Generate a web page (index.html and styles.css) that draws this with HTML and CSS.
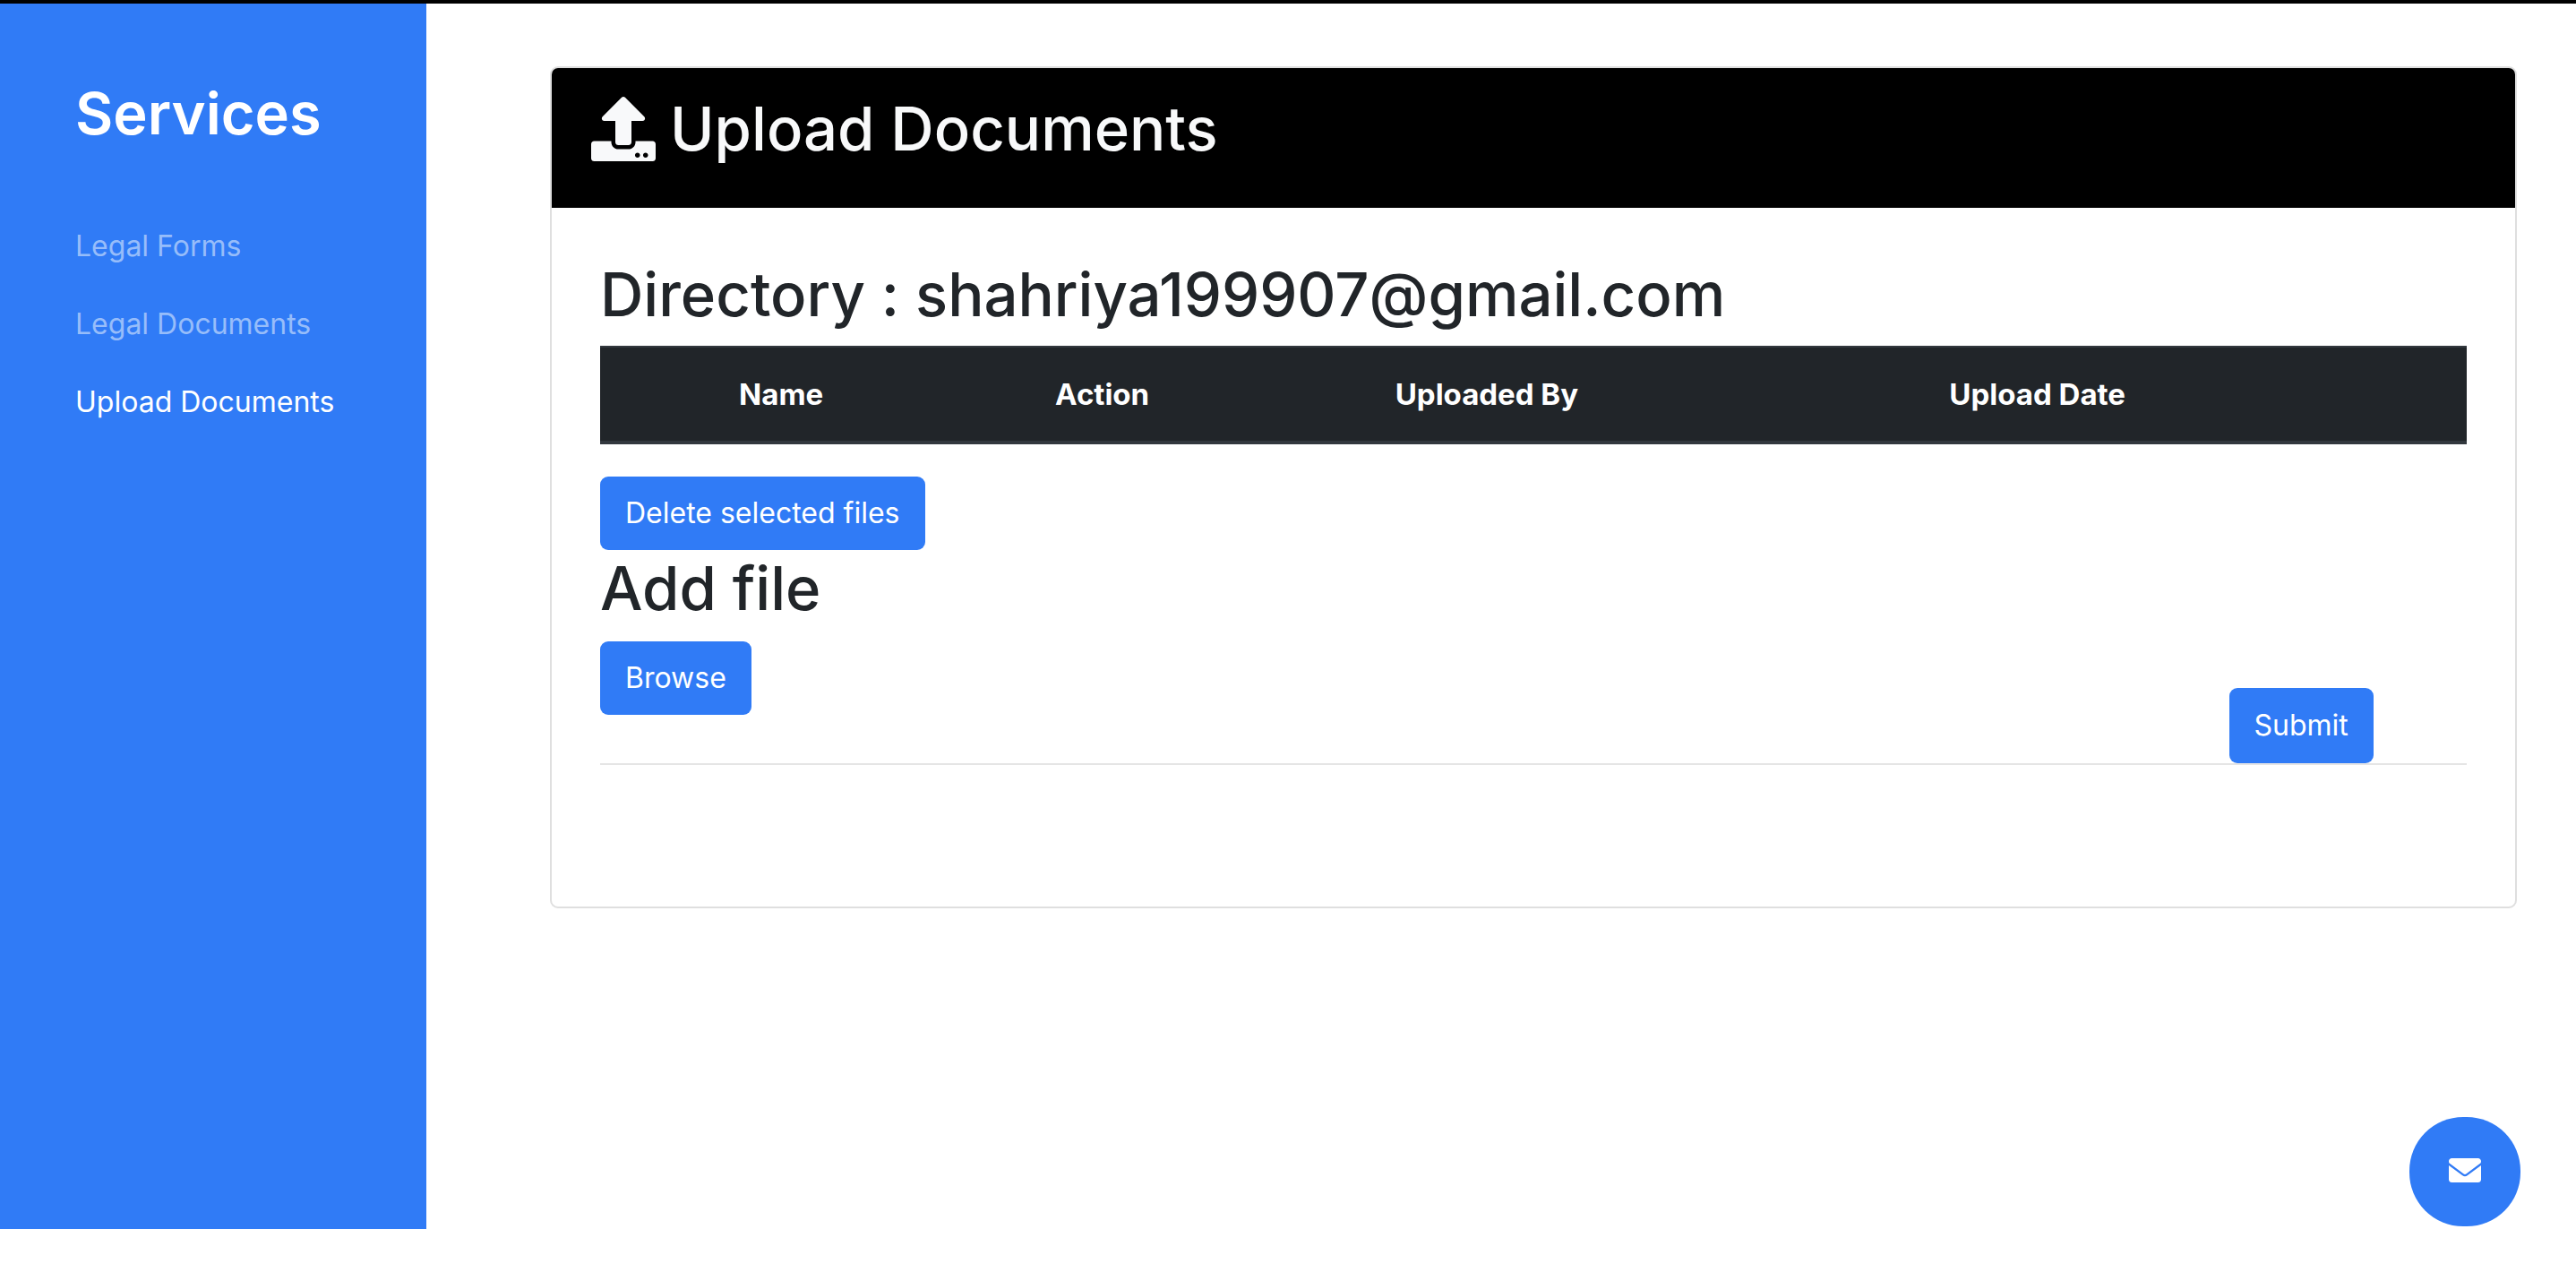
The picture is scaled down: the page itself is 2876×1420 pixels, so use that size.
FILE: index.html
```html
<!DOCTYPE html>
<html lang="en">
<head>
  <meta charset="utf-8">
  <title>Upload Documents</title>
  <link rel="stylesheet" href="styles.css">
</head>
<body>
  <div class="layout">
    <nav class="sidebar" aria-label="Services">
      <h1 class="sidebar-title">Services</h1>
      <ul class="sidebar-list">
        <li><a class="sidebar-link" href="#forms">Legal Forms</a></li>
        <li><a class="sidebar-link" href="#documents">Legal Documents</a></li>
        <li><a class="sidebar-link active" href="#upload" aria-current="page">Upload Documents</a></li>
      </ul>
    </nav>
    <main class="content">
      <section class="card">
        <header class="card-header">
          <svg class="upload-icon" viewBox="0 0 512 512" aria-hidden="true"><path fill="currentColor" d="M296 384h-80c-13.3 0-24-10.7-24-24V192h-87.7c-17.8 0-26.7-21.5-14.1-34.1L242.3 5.7c7.5-7.5 19.8-7.5 27.3 0l152.2 152.2c12.6 12.6 3.7 34.1-14.1 34.1H320v168c0 13.3-10.7 24-24 24zm216-8v112c0 13.3-10.7 24-24 24H24c-13.3 0-24-10.7-24-24V376c0-13.3 10.7-24 24-24h136v8c0 30.9 25.1 56 56 56h80c30.9 0 56-25.1 56-56v-8h136c13.3 0 24 10.7 24 24zm-124 88c0-11-9-20-20-20s-20 9-20 20 9 20 20 20 20-9 20-20zm64 0c0-11-9-20-20-20s-20 9-20 20 9 20 20 20 20-9 20-20z"/></svg>
          <h1 class="heading">Upload Documents</h1>
        </header>
        <div class="card-body">
          <h1 class="heading">Directory : shahriya199907@gmail.com</h1>
          <table class="files">
            <colgroup>
              <col class="col-name"><col class="col-action"><col class="col-by"><col class="col-date"><col>
            </colgroup>
            <thead>
              <tr><th scope="col">Name</th><th scope="col">Action</th><th scope="col">Uploaded By</th><th scope="col">Upload Date</th><td></td></tr>
            </thead>
          </table>
          <button class="btn" type="button">Delete selected files</button>
          <h1 class="heading">Add file</h1>
          <form class="upload-row">
            <button class="btn" type="button">Browse</button>
            <button class="btn btn-submit" type="submit">Submit</button>
          </form>
        </div>
      </section>
    </main>
  </div>
  <button class="contact" type="button" aria-label="Contact us">
    <svg class="mail-icon" viewBox="0 64 512 384" aria-hidden="true"><path fill="currentColor" d="M48 64C21.500 64 0 85.500 0 112c0 15.100 7.100 29.300 19.200 38.400L236.800 313.600c11.400 8.500 27 8.500 38.400 0L492.800 150.400c12.100-9.100 19.200-23.300 19.200-38.400 0-26.500-21.500-48-48-48H48zM0 176V400c0 26.500 21.500 48 48 48H464c26.500 0 48-21.500 48-48V176L294.400 339.200c-22.800 17.100-54 17.100-76.800 0L0 176z"/></svg>
  </button>
</body>
</html>
```
FILE: styles.css
```css
* {
  box-sizing: border-box;
}

body {
  margin: 0;
  border-top: 4px solid #000;
  background: #fff;
  color: #212529;
  font-family: Inter, "Liberation Sans", sans-serif;
  font-size: 32px;
  line-height: 54px;
}

.layout {
  display: flex;
  align-items: stretch;
  min-height: calc(100vh - 52px);
}

.sidebar {
  flex: 0 0 476px;
  padding: 80px 84px;
  background: #307bf6;
  color: #fff;
}

.sidebar-title {
  margin: 0 0 64px;
  font-size: 65px;
  font-weight: 600;
  line-height: 86px;
}

.sidebar-list {
  display: grid;
  gap: 33px;
  margin: 0;
  padding: 14px 0;
  list-style: none;
}

.sidebar-link {
  display: block;
  color: #97bdfa;
  text-decoration: none;
  white-space: nowrap;
}

.sidebar-link.active {
  color: #fff;
}

.content {
  flex: 1;
  padding: 70px 66px 70px 138px;
}

.card {
  overflow: hidden;
  border: 2px solid #dfdfdf;
  border-radius: 9px;
}

.card-header {
  display: flex;
  align-items: center;
  gap: 16px;
  padding: 25px 44px 45px;
  background: #000;
  color: #f8f9fa;
}

.upload-icon {
  width: 72px;
  height: 72px;
}

.heading {
  margin: 0;
  font-size: 67px;
  font-weight: 500;
  line-height: 86px;
}

.card-body {
  padding: 54px 54px 158px;
}

.files {
  width: 100%;
  margin: 14px 0 36px;
  border-collapse: collapse;
  table-layout: fixed;
  background: #212529;
  color: #fff;
}

.files thead {
  border-top: 2px solid #32383e;
  border-bottom: 4px solid #32383e;
}

.files th {
  padding: 25px 0;
  font-size: 33px;
  font-weight: 700;
  text-align: center;
}

.col-name {
  width: 19.4%;
}

.col-action {
  width: 15%;
}

.col-by {
  width: 26.2%;
}

.col-date {
  width: 32.8%;
}

.btn {
  display: block;
  height: 82px;
  padding: 0 28px;
  border: 0;
  border-radius: 9px;
  background: #307bf6;
  color: #fff;
  font: inherit;
}

.upload-row {
  display: flex;
  justify-content: space-between;
  height: 138px;
  margin-top: 16px;
  padding-right: 5%;
  border-bottom: 2px solid #e5e5e5;
}

.btn-submit {
  align-self: flex-end;
  height: 84px;
}

.contact {
  position: fixed;
  right: 62px;
  bottom: 51px;
  display: flex;
  align-items: center;
  justify-content: center;
  width: 124px;
  height: 122px;
  padding: 0 0 4px;
  border: 0;
  border-radius: 60px;
  background: #307bf6;
  color: #fff;
}

.mail-icon {
  width: 36px;
  height: 27px;
}
```
